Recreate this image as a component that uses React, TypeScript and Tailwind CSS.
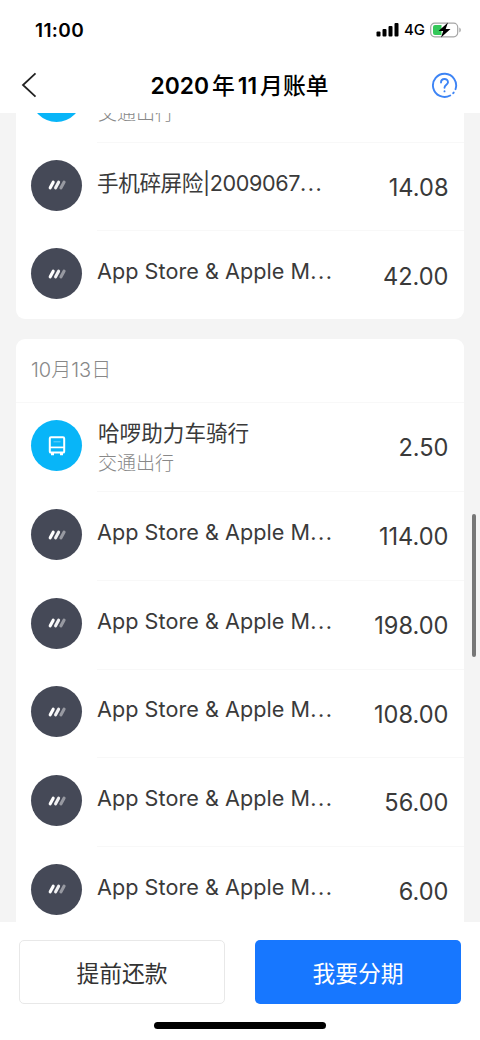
import clsx from "clsx";

type Bill = {
  name: string;
  amount: string;
  category?: string;
};

const previousBills: Bill[] = [
  { name: "哈啰助力车骑行", amount: "2.50", category: "交通出行" },
  { name: "手机碎屏险|2009067", amount: "14.08" },
  { name: "App Store & Apple M", amount: "42.00" },
];

const bills: Bill[] = [
  { name: "哈啰助力车骑行", amount: "2.50", category: "交通出行" },
  { name: "App Store & Apple M", amount: "114.00" },
  { name: "App Store & Apple M", amount: "198.00" },
  { name: "App Store & Apple M", amount: "108.00" },
  { name: "App Store & Apple M", amount: "56.00" },
  { name: "App Store & Apple M", amount: "6.00" },
];

const StatusBar = () => (
  <div className="flex h-[57px] shrink-0 items-center justify-between pt-[3px] pl-[35px] pr-[18px]">
    <span className="pt-[2px] text-[19px] font-semibold tracking-[0.4px]">11:00</span>
    <div className="flex items-center">
      <svg width="23" height="14" viewBox="0 0 23 14">
        <rect x="0.5" y="8.5" width="4" height="5" rx="1" />
        <rect x="6.5" y="6" width="4" height="7.5" rx="1" />
        <rect x="12.5" y="3" width="4" height="10.5" rx="1" />
        <rect x="18.5" y="0" width="4" height="13.5" rx="1" />
      </svg>
      <span className="ml-[5px] w-[21px] text-[15px] font-medium">4G</span>
      <svg className="ml-[5px]" width="32" height="16" viewBox="0 0 32 16">
        <rect x="0.7" y="1.2" width="27" height="13.6" rx="4" fill="none" stroke="#a5a5a5" strokeWidth="1.2" />
        <path d="M5 3h6.5v10H5a2 2 0 0 1-2-2V5a2 2 0 0 1 2-2z" fill="#34c759" />
        <path d="M29.3 5.5c2 .8 2 4.2 0 5z" fill="#a5a5a5" />
        <path d="M18 0.5L8.5 9H13.2L11 15.5L20.5 7H15.7z" />
      </svg>
    </div>
  </div>
);

const NavBar = () => (
  <div className="flex h-14 shrink-0 items-center justify-between pl-[21px] pr-[22px]">
    <svg width="26" height="26" viewBox="0 0 26 26" fill="none" stroke="#222" strokeWidth="1.8">
      <path d="M14.5 1.3L2 13L14.5 24.7" />
    </svg>
    <h1 className="flex gap-[3px] pt-px pl-px text-[22.8px] leading-9 font-semibold whitespace-nowrap">
      <span>2020</span>
      <span className="font-medium">年</span>
      <span>11</span>
      <span className="font-medium">月账单</span>
    </h1>
    <svg width="27" height="27" viewBox="0 0 27 27" fill="none" stroke="#3d84f5" strokeWidth="1.9" strokeLinecap="round">
      <path d="M19.2 23.5A11.6 11.6 0 1 1 24.5 17.2" />
      <path d="M22.2 21.2l.5-.6" />
      <path d="M10 10.5C10 5.8 17 5.8 17 10.3C17 12.7 13.5 13 13.5 15.8" />
      <path d="M13.5 19.3v.1" />
    </svg>
  </div>
);

const BillIcon = ({ transport }: { transport: boolean }) => (
  <div
    className={clsx(
      "mb-[2px] flex size-[51px] shrink-0 items-center justify-center rounded-full",
      transport ? "bg-[#08b5f8]" : "bg-[#454957]"
    )}
  >
    {transport ? (
      <svg width="18" height="20" viewBox="0 0 18 20" fill="none" stroke="#fff" strokeWidth="2">
        <rect x="1.8" y="1.2" width="14.4" height="15.4" rx="1.2" />
        <path d="M2 11.4h14" strokeWidth="1.7" />
        <path d="M5.5 5.8h7" strokeWidth="1" opacity="0.4" />
        <path d="M4.5 17v2.2M13.5 17v2.2" strokeWidth="3" />
      </svg>
    ) : (
      <svg width="18" height="10" viewBox="0 0 18 10" fill="none" strokeWidth="3.1" strokeLinecap="round">
        <path d="M5.2 2.2L2.2 7.8" stroke="#fff" />
        <path d="M10.6 2.2L7.6 7.8" stroke="#f0f0f2" />
        <path d="M16 2.2L13 7.8" stroke="#9799a1" />
      </svg>
    )}
  </div>
);

const BillRow = ({ bill, first }: { bill: Bill; first: boolean }) => (
  <div className="flex h-[88.7px] items-center pl-[15px]">
    <BillIcon transport={!!bill.category} />
    <div
      className={clsx(
        "ml-[15px] flex h-full flex-1 items-center justify-between pr-[15.5px] text-[#3a3a3a]",
        !first && "border-t border-[#f8f8f8]"
      )}
    >
      <div className={clsx("whitespace-nowrap", bill.category ? "pt-[3px] pl-px" : "pb-[8px]")}>
        <div
          className={clsx(
            "text-[21.6px] leading-[30px]",
            bill.name.includes("|") ? "tracking-[-0.4px]" : !bill.category && "tracking-[0.05px]"
          )}
        >
          {bill.name}
          {!bill.category && <span className="tracking-[1.5px]">...</span>}
        </div>
        {bill.category && (
          <div className="pt-px text-[19px] leading-[30px] font-light text-[#888]">{bill.category}</div>
        )}
      </div>
      <span className="pt-[2px] text-[23.6px]">{bill.amount}</span>
    </div>
  </div>
);

const App = () => {
  return (
    <div className="relative flex h-[1040px] w-[480px] flex-col overflow-hidden bg-white font-['Inter','Noto_Sans_CJK_SC',sans-serif] text-black">
      <StatusBar />
      <NavBar />

      <main className="min-h-0 flex-1 overflow-hidden bg-[#f4f4f4] px-4">
        <section className="-mt-[60px] rounded-[9px] bg-white">
          {previousBills.map((bill, index) => (
            <BillRow key={index} bill={bill} first={index === 0} />
          ))}
        </section>
        <section className="mt-5 rounded-[9px] bg-white">
          <h2 className="flex h-[63.5px] items-center border-b border-[#f8f8f8] pl-[15px] text-[20px] font-light text-[#888]">
            10月13日
          </h2>
          {bills.map((bill, index) => (
            <BillRow key={index} bill={bill} first={index === 0} />
          ))}
        </section>
      </main>

      <footer className="h-[118px] shrink-0 pt-[18px]">
        <div className="flex justify-between px-[19px] text-[22.8px]">
          <button className="h-[64px] w-[206px] rounded-[5px] border-[1.5px] border-[#e8e8e8] pt-[5px] text-[#333]">
            提前还款
          </button>
          <button className="h-[64px] w-[206px] rounded-[5px] bg-[#1777ff] pt-[5px] text-white">
            我要分期
          </button>
        </div>
        <div className="mx-auto mt-[18px] h-[7px] w-[172px] rounded-full bg-black" />
      </footer>

      <div className="absolute top-[514px] right-1 h-[143px] w-1 rounded-full bg-[#777]" />
    </div>
  );
};

export default App;
